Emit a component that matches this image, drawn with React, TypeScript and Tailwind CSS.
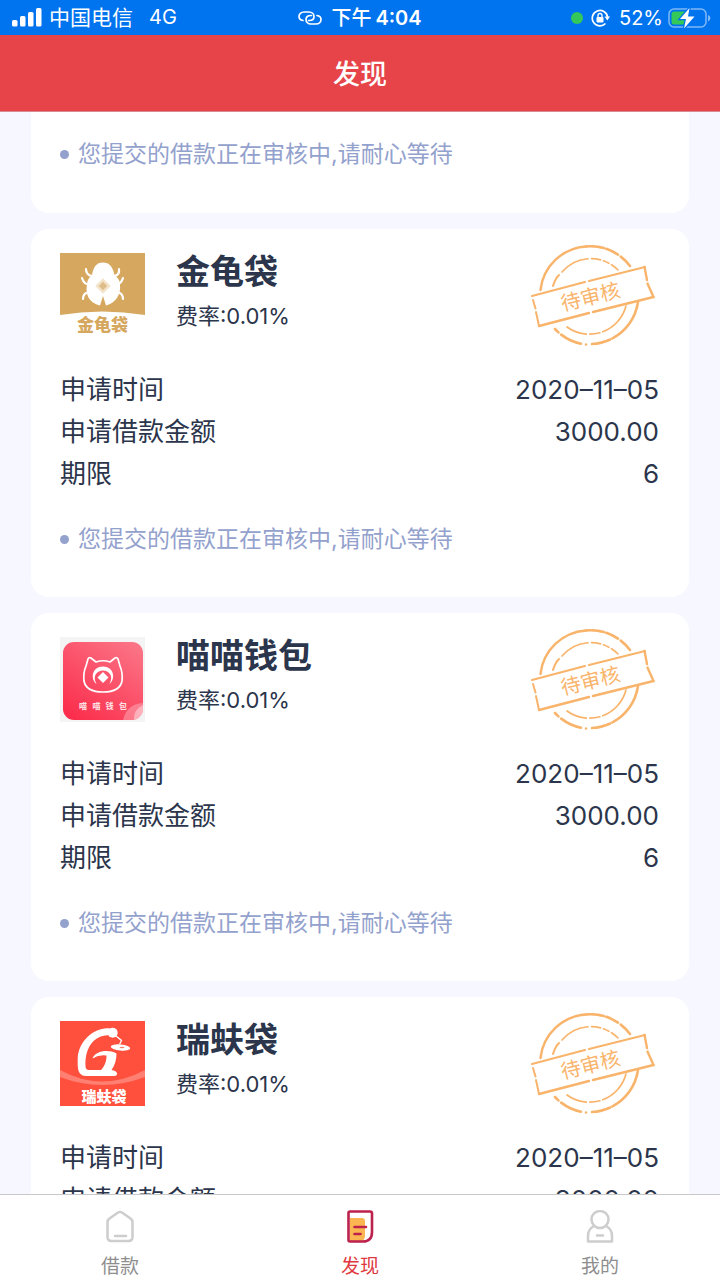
import type { ReactNode } from 'react';

type Loan = {
  name: string;
  rate: string;
  date: string;
  amount: string;
  term: string;
  logo: ReactNode;
};

const NOTICE = '您提交的借款正在审核中,请耐心等待';

function BeetleLogo() {
  return (
    <svg viewBox="0 0 85 85" className="size-[85px] shrink-0" aria-hidden="true">
      <rect width="85" height="85" fill="#fff" />
      <path d="M0 0H85V62Q42 55 0 62Z" fill="#d6a85f" />
      <g fill="none" stroke="#fff" strokeWidth="2.2" strokeLinecap="round" strokeLinejoin="round">
        <path d="M26 16Q26 22 32 23M59 16Q60 22 54 23M22 25Q24 32 31 32M63 25Q61 32 54 32M23 46Q23 40 29 39M63 46Q63 40 57 39" />
      </g>
      <path
        d="M38 10.5Q42.500 8.500 48 10.500Q53 14 54.500 22Q60 26 60 32C61 41 56 50 46 52.500L43 43L40 52.500C29 50 25 41 27 32Q27 26 32 22Q33 14 38 10.500Z"
        fill="#fff"
      />
      <rect x="37.500" y="27.500" width="11" height="11" transform="rotate(45 43 33)" fill="#f3e4ca" />
      <rect x="40" y="30" width="6" height="6" transform="rotate(45 43 33)" fill="#dfbd89" />
      <text x="42.500" y="78" textAnchor="middle" fontSize="17" fontWeight="900" fill="#d6a85f" className="font-['Noto_Sans_CJK_SC',sans-serif]">
        金龟袋
      </text>
    </svg>
  );
}

function CatLogo() {
  return (
    <svg viewBox="0 0 85 85" className="size-[85px] shrink-0" aria-hidden="true">
      <defs>
        <linearGradient id="cat-bg" x1="0.9" y1="0" x2="0.2" y2="1">
          <stop offset="0" stopColor="#fb7587" />
          <stop offset="1" stopColor="#fb2f4d" />
        </linearGradient>
        <clipPath id="cat-clip">
          <rect x="3" y="5" width="80" height="78" rx="11" />
        </clipPath>
      </defs>
      <rect width="85" height="85" fill="#f4f4f5" />
      <g clipPath="url(#cat-clip)">
        <rect x="3" y="5" width="80" height="78" fill="url(#cat-bg)" />
        <circle cx="83" cy="86" r="20" fill="#fff" opacity=".28" />
        <circle cx="87" cy="81" r="13" fill="#fff" opacity=".4" />
      </g>
      <path
        d="M28 22Q29 20 31 21L36 25Q43 22.500 50 25L55 21Q57 20 58 22L60 29Q63 36 62 44Q60 55 43 55Q26 55 24 44Q23 36 26 29Z"
        fill="none"
        stroke="#fff"
        strokeWidth="1.7"
        strokeLinejoin="round"
      />
      <path d="M36.500 47C30 42 32 29.500 43 29.500S56 42 49.500 47C54 39 49 33.500 43 33.500S32 39 36.500 47Z" fill="#fff" />
      <path d="M43 35L48.500 40.500L43 46L37.500 40.500Z" fill="#fff" />
      <g fontSize="8" fontWeight="700" fill="#ffe3e6" textAnchor="middle" className="font-['Noto_Sans_CJK_SC',sans-serif]">
        <text x="23" y="72">喵</text>
        <text x="36.500" y="72">喵</text>
        <text x="49.500" y="72">钱</text>
        <text x="63" y="72">包</text>
      </g>
    </svg>
  );
}

function LampLogo() {
  return (
    <svg viewBox="0 0 85 85" className="size-[85px] shrink-0" aria-hidden="true">
      <rect width="85" height="85" fill="#ff4f3d" />
      <path d="M0 49Q42 72 85 49V56Q42 72 0 56Z" fill="#ff8072" />
      <path
        d="M50 7.500C35 5.500 18 20 17.700 38C17.500 46 18 50 20 52.500Q22 55 26 55H54Q57.500 55 57 52Q56 49.500 51.500 49C55 44 56.500 39 56.500 32.500C48 28 35 30 32.500 37.500Q39 33.500 46.500 34.500C46.500 40 45 45 41 49H29Q25.500 49 25.500 45C25 35 27.500 26 33.500 20Q39.500 14 50 14Z"
        fill="#fff"
      />
      <circle cx="52.700" cy="11.700" r="5" fill="#fff" />
      <path d="M55.500 14.500L61.500 19.500L59.500 23.500" fill="none" stroke="#fff" strokeWidth="1.300" />
      <ellipse cx="60.500" cy="26.500" rx="9.800" ry="3" fill="#fff" transform="rotate(6 60.500 26.500)" />
      <ellipse cx="62" cy="26.500" rx="2.500" ry=".8" fill="#ff8072" />
      <text x="44" y="80.500" textAnchor="middle" fontSize="15" fontWeight="800" fill="#fff" className="font-['Noto_Sans_CJK_SC',sans-serif]">
        瑞蚨袋
      </text>
    </svg>
  );
}

function Stamp() {
  return (
    <svg viewBox="11 10 124 102" className="mr-1 h-[102px] w-[124px] shrink-0" role="img" aria-label="待审核">
      <g fill="none" stroke="#f9b46c" strokeLinecap="round">
        <path d="M20.500 55A49 49 0 0 1 66 11.500" strokeWidth="2.400" />
        <path d="M66 11.500A49 49 0 0 1 110 31" strokeWidth="2.600" strokeDasharray="18 2.500 13 3.500 20 0" />
        <path d="M118 67A49 49 0 0 1 72 109" strokeWidth="2.600" strokeDasharray="46 2.500 30 0" />
        <path d="M66 109.500A49 49 0 0 1 35 94" strokeWidth="2.600" strokeDasharray="0 5 22 3.500 9 0" />
        <path d="M33 51Q35 44 39 40" strokeWidth="2" />
        <path d="M42 37A38 38 0 0 1 98 35" strokeWidth="1.700" strokeDasharray="30 3.500 9 3 6 3" />
        <path d="M106 71A38 38 0 0 1 47 92" strokeWidth="1.700" strokeDasharray="36 3 10 3.500" />
      </g>
      <path d="M12 61L125 32L134 62L19 91Z" fill="#fff" />
      <g fill="none" stroke="#f9b46c" strokeLinecap="round">
        <path d="M12 61L65 47M69 46L125 32" strokeWidth="2.200" />
        <path d="M124.500 32L127 45M127.500 48.500L133.500 62" strokeWidth="2.400" />
        <path d="M133.500 62L73 77M69 78L19 91" strokeWidth="2.400" />
        <path d="M19 91L16 77M15.500 73.500L13 65" strokeWidth="2" />
      </g>
      <text x="70.500" y="69" textAnchor="middle" fontSize="20" fill="#f9b46c" transform="rotate(-14 70.500 62)" className="font-['Noto_Sans_CJK_SC',sans-serif]">
        待审核
      </text>
    </svg>
  );
}

const LOANS: Loan[] = [
  { name: '金龟袋', rate: '0.01%', date: '2020–11–05', amount: '3000.00', term: '6', logo: <BeetleLogo /> },
  { name: '喵喵钱包', rate: '0.01%', date: '2020–11–05', amount: '3000.00', term: '6', logo: <CatLogo /> },
  { name: '瑞蚨袋', rate: '0.01%', date: '2020–11–05', amount: '3000.00', term: '6', logo: <LampLogo /> },
];

function Notice() {
  return (
    <p className="flex items-center gap-[9px] text-[23px] leading-8 text-[#93a1cd]">
      <span className="size-[9px] shrink-0 rounded-full bg-[#93a1cd]" />
      {NOTICE}
    </p>
  );
}

function Row({ label, value }: { label: string; value: string }) {
  return (
    <div className="flex justify-between">
      <dt>{label}</dt>
      <dd>{value}</dd>
    </div>
  );
}

function LoanCard({ loan }: { loan: Loan }) {
  return (
    <article className="h-[368px] shrink-0 rounded-[18px] bg-white pt-4 pr-[30px] pl-[29px]">
      <div className="flex items-start">
        <div className="mt-2">{loan.logo}</div>
        <div className="ml-[31px] flex-1">
          <h2 className="mt-1 text-[34px] leading-[46px] font-bold">{loan.name}</h2>
          <p className="mt-[5px] text-[22px] leading-8">费率:{loan.rate}</p>
        </div>
        <Stamp />
      </div>
      <dl className="mt-[22px] text-[26px] leading-[42px]">
        <Row label="申请时间" value={loan.date} />
        <Row label="申请借款金额" value={loan.amount} />
        <Row label="期限" value={loan.term} />
      </dl>
      <div className="mt-7">
        <Notice />
      </div>
    </article>
  );
}

function StatusBar() {
  return (
    <div className="grid h-[35px] shrink-0 grid-cols-3 items-center bg-[#0073ee] text-xl text-white">
      <div className="flex items-center pl-3">
        <svg viewBox="0 0 30 20" className="h-5 w-[30px]" fill="#fff" aria-hidden="true">
          <rect x="0" y="13" width="5.500" height="6.500" rx="1.500" />
          <rect x="8" y="9" width="5.500" height="10.500" rx="1.500" />
          <rect x="16" y="5" width="5.500" height="14.500" rx="1.500" />
          <rect x="24" y="1" width="5.500" height="18.500" rx="1.500" />
        </svg>
        <span className="ml-[7px] text-[21px]">中国电信</span>
        <span className="ml-4">4G</span>
      </div>
      <div className="flex items-center justify-center">
        <svg viewBox="0 0 24 14" className="mr-[9px] h-[14px] w-6" fill="none" stroke="#fff" strokeWidth="1.700" strokeLinecap="round" aria-hidden="true">
          <path d="M5 9.500C2 9 1 7.500 1 5.500C1 3 3 1 6 1H11C14 1 16 3 16 5.500C16 8 14 9.500 11.500 9.500H10.500" />
          <path d="M19 4.500C22 5 23 6.500 23 8.500C23 11 21 13 18 13H13C10 13 8 11 8 8.500C8 6 10 4.500 12.500 4.500H13.500" />
        </svg>
        <span className="font-medium">下午</span>
        <span className="ml-1 font-semibold">4:04</span>
      </div>
      <div className="flex items-center justify-end pr-[9px]">
        <span className="mr-2 size-3 rounded-full bg-[#34c759]" />
        <svg viewBox="0 0 19 18" className="mr-[9px] h-[18px] w-[19px]" aria-hidden="true">
          <path d="M14.500 14.500A7.700 7.700 0 1 1 16.600 8" fill="none" stroke="#fff" strokeWidth="1.700" />
          <path d="M13.500 7.500H19L16.300 11.500Z" fill="#fff" />
          <rect x="5.500" y="8" width="7" height="5.500" rx="1" fill="#fff" />
          <path d="M7 8.500V6.500A2 2 0 0 1 11 6.500V8.500" fill="none" stroke="#fff" strokeWidth="1.300" />
        </svg>
        <span>52%</span>
        <svg viewBox="0 0 43 22" className="ml-[5px] h-[22px] w-[43px]" aria-hidden="true">
          <rect x="1" y="2" width="37" height="18" rx="5" fill="none" stroke="#7fb8f6" strokeWidth="1.500" />
          <path d="M40 8Q42.500 9 42.500 11T40 14.500Z" fill="#7fb8f6" />
          <path d="M6 4.500H20V17.500H6Q3.500 17.500 3.500 15V7Q3.500 4.500 6 4.500Z" fill="#34c759" />
          <path d="M21.500 1L12 12H18L16 21.500L26.500 9.500H20Z" fill="#fff" stroke="#0073ee" strokeWidth="2.500" paintOrder="stroke" />
        </svg>
      </div>
    </div>
  );
}

function HomeIcon() {
  return (
    <svg viewBox="0 0 28 34" className="h-[34px] w-7" fill="none" stroke="#cdcdcd" strokeWidth="2.500" strokeLinecap="round" strokeLinejoin="round" aria-hidden="true">
      <path d="M12 2.500Q14 1.300 16 2.500L24.500 8.500Q26.500 10 26.500 12V27Q26.500 31 22.500 31H5.500Q1.500 31 1.500 27V12Q1.500 10 3.500 8.500Z" />
      <path d="M9 26H20" />
    </svg>
  );
}

function DiscoverIcon() {
  return (
    <svg viewBox="0 0 28 34" className="h-[34px] w-7" fill="none" stroke="#bd214e" strokeWidth="2.600" strokeLinecap="round" strokeLinejoin="round" aria-hidden="true">
      <path d="M4 8H16Q19 8 19 11V27L17 31H4Z" fill="#fbb651" stroke="none" />
      <path d="M4 1.500H24Q26 1.500 26 3.500V22Q26 31.500 17 31.500H4Q2.500 31.500 2.500 30V3Q2.500 1.500 4 1.500Z" />
      <path d="M8.500 17H20M8.500 24H14.500" />
    </svg>
  );
}

function ProfileIcon() {
  return (
    <svg viewBox="0 0 28 34" className="h-[34px] w-7" fill="none" stroke="#cdcdcd" strokeWidth="2.500" strokeLinecap="round" strokeLinejoin="round" aria-hidden="true">
      <circle cx="14" cy="9.500" r="8.500" />
      <path d="M8 16Q2 19 2 26V31.500H26V26Q26 19 20 16" />
      <path d="M11 25.500H17" />
    </svg>
  );
}

function TabBar() {
  const tab = 'flex flex-1 flex-col items-center pt-[15px] text-[19px] leading-6';
  return (
    <nav className="flex h-[86px] shrink-0 border-t border-[#c8c8c8] bg-white text-[#8e8e8e]">
      <a href="#loan" className={tab}>
        <HomeIcon />
        <span className="mt-[11px]">借款</span>
      </a>
      <a href="#discover" aria-current="page" className={tab}>
        <DiscoverIcon />
        <span className="mt-[11px] text-[#e0383f]">发现</span>
      </a>
      <a href="#me" className={tab}>
        <ProfileIcon />
        <span className="mt-[11px]">我的</span>
      </a>
    </nav>
  );
}

export default function App() {
  return (
    <div className="flex h-screen flex-col overflow-hidden bg-[#f7f8ff] font-[Inter,'Noto_Sans_CJK_SC',sans-serif] text-[#2b354b]">
      <StatusBar />
      <header className="flex h-[77px] shrink-0 items-center justify-center border-b border-[#d98a90] bg-[#e64449] pt-1">
        <h1 className="text-[27px] font-medium text-white">发现</h1>
      </header>
      <main className="flex min-h-0 flex-1 flex-col gap-4 overflow-hidden px-[31px]">
        <article className="h-[101px] shrink-0 rounded-b-[18px] bg-white pt-[26px] pr-[30px] pl-[29px]">
          <Notice />
        </article>
        {LOANS.map((loan) => (
          <LoanCard key={loan.name} loan={loan} />
        ))}
      </main>
      <TabBar />
    </div>
  );
}
